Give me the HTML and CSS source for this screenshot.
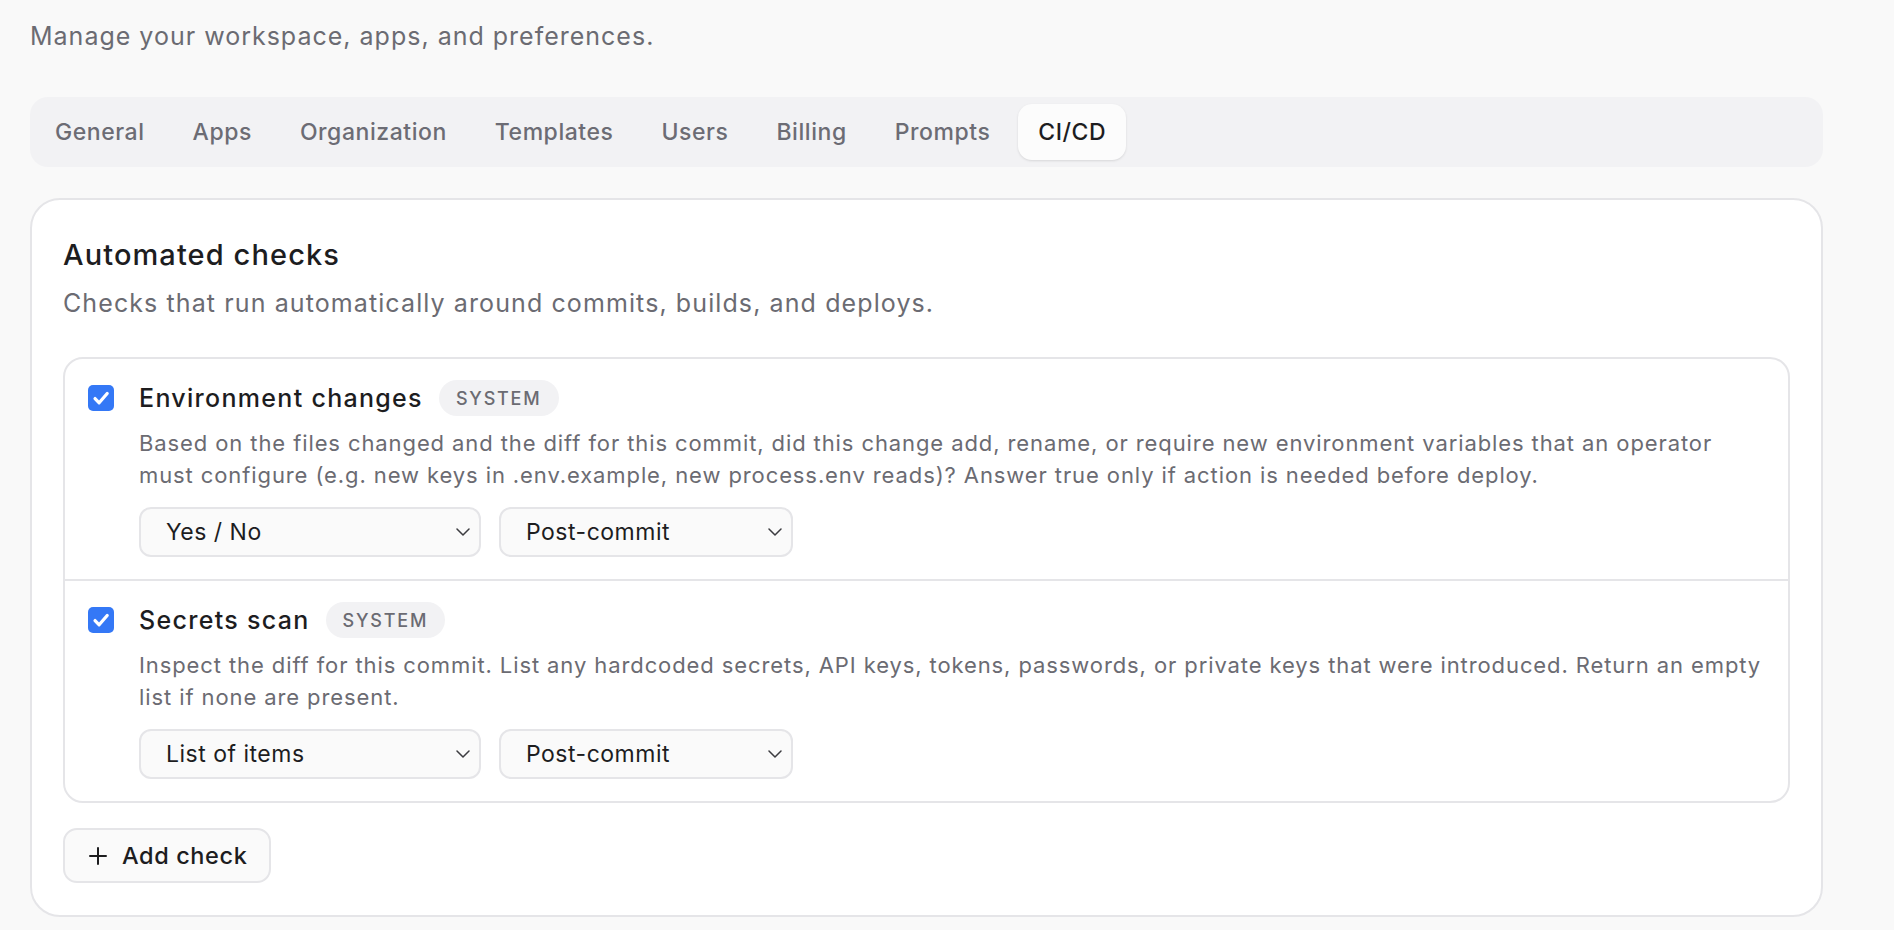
FILE: index.html
```html
<!DOCTYPE html>
<html lang="en">
<head>
<meta charset="utf-8">
<title>Settings – CI/CD</title>
<link rel="stylesheet" href="styles.css">
</head>
<body>
<div class="page">
  <p class="subtitle">Manage your workspace, apps, and preferences.</p>

  <nav class="tabs">
    <button class="tab">General</button>
    <button class="tab">Apps</button>
    <button class="tab">Organization</button>
    <button class="tab">Templates</button>
    <button class="tab">Users</button>
    <button class="tab">Billing</button>
    <button class="tab">Prompts</button>
    <button class="tab tab-active">CI/CD</button>
  </nav>

  <section class="card">
    <h2 class="card-title">Automated checks</h2>
    <p class="card-desc">Checks that run automatically around commits, builds, and deploys.</p>

    <div class="check-list">
      <div class="check-row">
        <div class="check-box-cell">
          <span class="checkbox">
            <svg viewBox="0 0 24 24" width="26" height="26"><path d="M6.5 12.5l3.8 3.9 7.4-8.6" fill="none" stroke="#fff" stroke-width="3" stroke-linecap="round" stroke-linejoin="round"/></svg>
          </span>
        </div>
        <div class="check-body">
          <div class="check-head">
            <span class="check-title">Environment changes</span>
            <span class="badge">SYSTEM</span>
          </div>
          <p class="check-desc">Based on the files changed and the diff for this commit, did this change add, rename, or require new environment variables that an operator<br>must configure (e.g. new keys in .env.example, new process.env reads)? Answer true only if action is needed before deploy.</p>
          <div class="selects">
            <div class="select select-type"><span>Yes / No</span><svg viewBox="0 0 14 8" width="14" height="8"><path d="M1 1l6 6 6-6" fill="none" stroke="#3c3c40" stroke-width="1.5" stroke-linecap="round" stroke-linejoin="round"/></svg></div>
            <div class="select select-when"><span>Post-commit</span><svg viewBox="0 0 14 8" width="14" height="8"><path d="M1 1l6 6 6-6" fill="none" stroke="#3c3c40" stroke-width="1.5" stroke-linecap="round" stroke-linejoin="round"/></svg></div>
          </div>
        </div>
      </div>

      <div class="check-row">
        <div class="check-box-cell">
          <span class="checkbox">
            <svg viewBox="0 0 24 24" width="26" height="26"><path d="M6.5 12.5l3.8 3.9 7.4-8.6" fill="none" stroke="#fff" stroke-width="3" stroke-linecap="round" stroke-linejoin="round"/></svg>
          </span>
        </div>
        <div class="check-body">
          <div class="check-head">
            <span class="check-title">Secrets scan</span>
            <span class="badge">SYSTEM</span>
          </div>
          <p class="check-desc">Inspect the diff for this commit. List any hardcoded secrets, API keys, tokens, passwords, or private keys that were introduced. Return an empty<br>list if none are present.</p>
          <div class="selects">
            <div class="select select-type"><span>List of items</span><svg viewBox="0 0 14 8" width="14" height="8"><path d="M1 1l6 6 6-6" fill="none" stroke="#3c3c40" stroke-width="1.5" stroke-linecap="round" stroke-linejoin="round"/></svg></div>
            <div class="select select-when"><span>Post-commit</span><svg viewBox="0 0 14 8" width="14" height="8"><path d="M1 1l6 6 6-6" fill="none" stroke="#3c3c40" stroke-width="1.5" stroke-linecap="round" stroke-linejoin="round"/></svg></div>
          </div>
        </div>
      </div>
    </div>

    <button class="add-btn">
      <svg viewBox="0 0 20 20" width="20" height="20"><path d="M10 2v16M2 10h16" fill="none" stroke="#1d1d1f" stroke-width="2" stroke-linecap="round"/></svg>
      <span>Add check</span>
    </button>
  </section>
</div>
</body>
</html>
```

FILE: styles.css
```css
* {
  box-sizing: border-box;
}

html, body {
  margin: 0;
  padding: 0;
  background: #f9f9f9;
  font-family: "Inter", "Noto Sans", "Liberation Sans", sans-serif;
  color: #1d1d1f;
  -webkit-font-smoothing: antialiased;
}

.page {
  width: 1823px;
  padding-left: 30px;
  padding-bottom: 40px;
}

.subtitle {
  margin: 18px 0 0;
  font-size: 25px;
  line-height: 36px;
  letter-spacing: 1px;
  color: #6b6b72;
}

.tabs {
  margin-top: 43px;
  height: 70px;
  padding: 7px 5px;
  display: flex;
  gap: 8px;
  background: #f2f2f4;
  border-radius: 18px;
}

.tab {
  height: 56px;
  padding: 0 20px;
  border: 0;
  background: transparent;
  border-radius: 14px;
  font-family: inherit;
  font-size: 23px;
  font-weight: 500;
  letter-spacing: 0.55px;
  color: #6c6c74;
  cursor: pointer;
}

.tab-active {
  background: #fcfcfc;
  color: #1d1d1f;
  box-shadow: 0 1px 3px rgba(0, 0, 0, 0.08), 0 1px 2px rgba(0, 0, 0, 0.04);
}

.card {
  margin-top: 31px;
  background: #ffffff;
  border: 2px solid #e5e5e8;
  border-radius: 30px;
  padding: 35px 31px 32px;
}

.card-title {
  margin: 0;
  font-size: 29px;
  line-height: 40px;
  font-weight: 500;
  letter-spacing: 1.1px;
  color: #1d1d1f;
}

.card-desc {
  margin: 10px 0 0;
  font-size: 25px;
  line-height: 36px;
  letter-spacing: 1.1px;
  color: #6b6b72;
}

.check-list {
  margin-top: 36px;
  border: 2px solid #e5e5e8;
  border-radius: 20px;
}

.check-row {
  display: flex;
  gap: 25px;
  padding: 21px 20px 22px 23px;
}

.check-row + .check-row {
  border-top: 2px solid #e5e5e8;
}

.check-box-cell {
  height: 36px;
  display: flex;
  align-items: center;
  flex: none;
}

.checkbox {
  width: 26px;
  height: 26px;
  border-radius: 5px;
  background: #3478f6;
  display: flex;
  align-items: center;
  justify-content: center;
}

.checkbox svg {
  display: block;
}

.check-body {
  flex: 1;
  min-width: 0;
}

.check-head {
  height: 36px;
  display: flex;
  align-items: center;
  gap: 16px;
}

.check-title {
  font-size: 25px;
  line-height: 36px;
  font-weight: 500;
  letter-spacing: 1.3px;
  color: #1d1d1f;
}

.badge {
  height: 36px;
  padding: 0 17px;
  display: inline-flex;
  align-items: center;
  background: #f2f2f4;
  border-radius: 18px;
  font-size: 18px;
  font-weight: 500;
  letter-spacing: 1.8px;
  color: #6b6b72;
}

.check-desc {
  margin: 11px 0 0;
  font-size: 22px;
  line-height: 32px;
  letter-spacing: 0.9px;
  color: #6b6b72;
}

.selects {
  margin-top: 16px;
  display: flex;
  gap: 18px;
}

.select {
  height: 50px;
  display: flex;
  align-items: center;
  justify-content: space-between;
  padding: 0 9px 0 25px;
  background: #fafafa;
  border: 2px solid #e5e5e8;
  border-radius: 12px;
  font-size: 23px;
  letter-spacing: 0.5px;
  color: #1d1d1f;
}

.select svg {
  display: block;
  flex: none;
}

.select-type {
  width: 342px;
}

.select-when {
  width: 294px;
}

.add-btn {
  margin-top: 25px;
  height: 55px;
  padding: 0 22px 0 23px;
  display: inline-flex;
  align-items: center;
  gap: 14px;
  background: #fafafa;
  border: 2px solid #e5e5e8;
  border-radius: 14px;
  font-family: inherit;
  font-size: 23.5px;
  font-weight: 500;
  letter-spacing: 0.6px;
  color: #1d1d1f;
  cursor: pointer;
}

.add-btn svg {
  display: block;
}
```
